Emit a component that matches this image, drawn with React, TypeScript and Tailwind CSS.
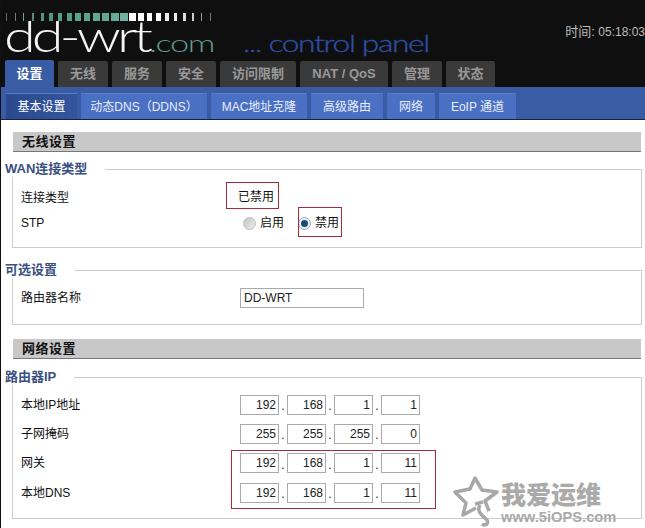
const font = { fontFamily: '"Liberation Sans", "Noto Sans CJK SC", sans-serif' };

const mainTabs = [
  { label: "设置", width: "w-[49px]", active: true },
  { label: "无线", width: "w-[50px]" },
  { label: "服务", width: "w-[50px]" },
  { label: "安全", width: "w-[50px]" },
  { label: "访问限制", width: "w-[76px]" },
  { label: "NAT / QoS", width: "w-[88px]" },
  { label: "管理", width: "w-[50px]" },
  { label: "状态", width: "w-[49px]" },
];

const subTabs = [
  { label: "基本设置", width: "w-[71px]", active: true },
  { label: "动态DNS（DDNS）", width: "w-[126px]" },
  { label: "MAC地址克隆", width: "w-[96px]" },
  { label: "高级路由", width: "w-[72px]" },
  { label: "网络", width: "w-[48px]" },
  { label: "EoIP 通道", width: "w-[77px]" },
];

const bars = [
  [5, 1, "#666"], [14, 1, "#777"], [22, 1, "#6a9"], [31, 2, "#4f8f7c"], [40, 3, "#4f9582"], [48, 4, "#4f9582"],
  [57, 4, "#559c88"], [66, 5, "#559c88"], [74, 6, "#5aa28e"], [83, 6, "#5aa28e"], [92, 7, "#60a794"], [101, 7, "#60a794"],
  [110, 8, "#66ad9a"], [119, 8, "#6cb3a0"], [128, 7, "#fff"], [137, 6, "#fff"], [146, 5, "#fff"], [155, 5, "#fff"],
  [164, 4, "#eee"], [173, 3, "#eee"], [182, 3, "#ddd"], [191, 2, "#ccc"], [200, 1, "#999"], [209, 1, "#777"],
] as const;

function Logo() {
  return (
    <svg width="432" height="60" viewBox="0 0 432 60" className="block">
      {bars.map(([x, w, c]) => (
        <rect key={x} x={x} y={13} width={w} height={8} fill={c} />
      ))}
      <text x="3" y="52" textLength="145" lengthAdjust="spacingAndGlyphs" letterSpacing="-3" fontFamily="Lato" fontWeight="300" fontSize="43" fill="#f4f4f4">dd-wrt</text>
      <text x="148" y="52" textLength="65" lengthAdjust="spacingAndGlyphs" letterSpacing="-1" fontFamily="Lato" fontWeight="300" fontSize="24" fill="#5f9c8e">.com</text>
      <text x="242" y="52" textLength="186" lengthAdjust="spacingAndGlyphs" letterSpacing="-1" fontFamily="Lato" fontWeight="300" fontSize="23" fill="#2c4fa8" stroke="#2c4fa8" strokeWidth="0.3">... control panel</text>
    </svg>
  );
}

function Section({ title }: { title: string }) {
  return (
    <div className="ml-[12px] mr-[4px] flex h-[20px] items-center border-b border-[#777] bg-[#c8c8c8] pl-[9px] text-[13px] font-bold tracking-[0.5px] text-[#111]">
      {title}
    </div>
  );
}

function Group({ legend, className, children }: { legend: string; className: string; children: React.ReactNode }) {
  return (
    <fieldset className={`ml-[11px] mr-[3px] border border-[#ccc] pl-[8px] ${className}`}>
      <legend className="-ml-[16px] pr-[18px] text-[13px] leading-[16px] font-bold text-[#3a5080]">{legend}</legend>
      {children}
    </fieldset>
  );
}

function Row({ label, className, children }: { label: string; className: string; children: React.ReactNode }) {
  return (
    <div className={`flex items-center text-[12px] text-[#111] ${className}`}>
      <span className="w-[219px] shrink-0">{label}</span>
      {children}
    </div>
  );
}

function IpInputs({ value }: { value: string[] }) {
  return (
    <div className="flex items-center">
      {value.map((v, i) => (
        <div key={i} className="flex items-center">
          <input
            readOnly
            value={v}
            className="h-[20px] w-[39px] border border-[#aaa] bg-white pr-[2px] text-right text-[12px] text-[#222] outline-none"
            style={font}
          />
          {i < 3 && <span className="w-[8px] pt-[3px] text-center text-[12px]">.</span>}
        </div>
      ))}
    </div>
  );
}

function Radio({ checked, label }: { checked?: boolean; label: string }) {
  return (
    <label className="flex items-center">
      <span
        className={`flex h-[13px] w-[13px] items-center justify-center rounded-full border ${
          checked ? "border-[#9ab] bg-[#e8eef4]" : "border-[#bbb] bg-linear-to-br from-[#c4c4c4] to-[#eee]"
        }`}
      >
        {checked && <span className="h-[7px] w-[7px] rounded-full bg-[#1c4a78]" />}
      </span>
      <span className="ml-[4px]">{label}</span>
    </label>
  );
}

export default function App() {
  return (
    <div className="relative h-[528px] w-[645px] overflow-hidden border-l border-[#111] bg-white" style={font}>
      <header className="bg-[#0f0f0f]">
        <div className="flex h-[60px] justify-between">
          <Logo />
          <span className="mt-[22px] whitespace-nowrap text-[12px] text-[#bbb]">
            <span className="text-[13px]">时间:</span> 05:18:03
          </span>
        </div>
        <nav className="flex h-[27px] items-end gap-[4px] pl-[4px]">
          {mainTabs.map((t) => (
            <div
              key={t.label}
              className={`flex shrink-0 items-center justify-center rounded-t-[2px] text-[13px] font-bold ${t.width} ${
                t.active ? "h-[27px] bg-[#3a5ca5] text-white" : "h-[26px] bg-[#3a3a3a] text-[#999]"
              }`}
            >
              {t.label}
            </div>
          ))}
        </nav>
      </header>
      <nav className="flex h-[33px] items-end gap-[4px] border-b border-[#16233f] bg-[#3a5ca5] pl-[5px]">
        {subTabs.map((t) => (
          <div
            key={t.label}
            className={`flex h-[26px] shrink-0 items-center justify-center border-t border-[#5a7cc5] text-[12px] text-[#e8eefc] ${t.width} ${
              t.active ? "bg-linear-to-r from-[#2b4a8e] to-[#34559d] text-white" : "bg-[#4a70c4]"
            }`}
          >
            {t.label}
          </div>
        ))}
      </nav>
      <main className="pt-[12px]">
        <Section title="无线设置" />
        <Group legend="WAN连接类型" className="mt-[9px] h-[87px] pt-[8px]">
          <Row label="连接类型" className="h-[25px]">
            <span className="-mt-[2px] -ml-[2px]">已禁用</span>
          </Row>
          <Row label="STP" className="h-[25px]">
            <div className="ml-[3px] flex pt-[1px]">
              <Radio label="启用" />
              <div className="ml-[14px]">
                <Radio checked label="禁用" />
              </div>
            </div>
          </Row>
        </Group>
        <Group legend="可选设置" className="mt-[14px] h-[63px] pt-[10px]">
          <Row label="路由器名称" className="h-[20px]">
            <input
              readOnly
              value="DD-WRT"
              className="h-[20px] w-[124px] border border-[#aaa] px-[3px] text-[12px] text-[#222] outline-none"
              style={font}
            />
          </Row>
        </Group>
        <div className="mt-[14px]">
          <Section title="网络设置" />
        </div>
        <Group legend="路由器IP" className="mt-[10px] h-[150px] pt-[5px]">
          <Row label="本地IP地址" className="h-[29px]">
            <IpInputs value={["192", "168", "1", "1"]} />
          </Row>
          <Row label="子网掩码" className="h-[29px]">
            <IpInputs value={["255", "255", "255", "0"]} />
          </Row>
          <Row label="网关" className="h-[30px]">
            <IpInputs value={["192", "168", "1", "11"]} />
          </Row>
          <Row label="本地DNS" className="h-[29px]">
            <IpInputs value={["192", "168", "1", "11"]} />
          </Row>
        </Group>
      </main>

      {/* red annotation boxes drawn over the page */}
      <div className="absolute left-[225px] top-[182px] h-[27px] w-[53px] border border-[#a52a3a]" />
      <div className="absolute left-[297px] top-[207px] h-[30px] w-[44px] border border-[#a52a3a]" />
      <div className="absolute left-[230px] top-[450px] h-[59px] w-[205px] border border-[#a52a3a]" />

      {/* watermark */}
      <div className="absolute left-[451px] top-[475px] flex">
        <svg width="48" height="53" viewBox="0 0 48 53" fill="none" stroke="#a8a8a8" strokeWidth="3.5" strokeLinejoin="round">
          <path d="M37 36 L33 26 L45 17 L30 15 L23 3 L18 14 L3 17 L14 28 L11 40 L24 33" />
          <path d="M23 29 L31 27 M28 30 C24 37 31 41 35 45 C37 49 33 51 30 49" />
        </svg>
        <div className="ml-[1px] flex flex-col items-start pt-[5px]">
          <span className="text-[25px] leading-[30px] font-black whitespace-nowrap text-[#aaa]">我爱运维</span>
          <span className="text-[14.7px] leading-[14px] font-bold whitespace-nowrap text-[#aaa]">www.5iOPS.com</span>
        </div>
      </div>
    </div>
  );
}
